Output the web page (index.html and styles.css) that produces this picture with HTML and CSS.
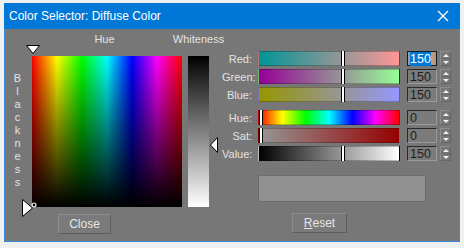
FILE: index.html
```html
<!DOCTYPE html>
<html lang="en">
    <head>
        <meta charset="UTF-8">
        <title>Color Selector: Diffuse Color</title>
        <link rel="stylesheet" href="styles.css">
    </head>
    <body>
        <div class="window">
            <div class="titlebar">
                <span class="title">Color Selector: Diffuse Color</span>
                <svg class="close-x" width="12" height="12" viewBox="0 0 12 12">
                    <path d="M1 1 L11 11 M11 1 L1 11" stroke="#fff" stroke-width="1.3" fill="none"/>
                </svg>
            </div>
            <div class="content">
                <!-- picker -->
                <div class="left">
                    <div class="heading">
                        <span class="heading-hue">Hue</span>
                        <span class="heading-white"><span>Whiteness</span></span>
                    </div>
                    <div class="picker">
                        <div class="blackness">
                            <span>B</span><span>l</span><span>a</span><span>c</span><span>k</span><span>n</span><span>e</span><span>s</span><span>s</span>
                        </div>
                        <div class="square">
                            <svg class="marker marker-hue" width="14" height="9" viewBox="0 0 14 9">
                                <path d="M0.5 0.5 L13.5 0.5 L7 8.5 Z" fill="#fff" stroke="#000"/>
                            </svg>
                            <svg class="marker marker-black" width="11" height="18" viewBox="0 0 11 18">
                                <path d="M0.5 0.5 L10.5 9 L0.5 17.5 Z" fill="#fff" stroke="#000"/>
                            </svg>
                            <svg class="marker marker-cursor" width="6" height="6" viewBox="0 0 6 6">
                                <circle cx="3" cy="3" r="2" fill="none" stroke="#fff" stroke-width="1.2"/>
                            </svg>
                        </div>
                        <div class="whiteness">
                            <svg class="marker marker-white" width="8" height="16" viewBox="0 0 8 16">
                                <path d="M7.5 0.5 L0.5 8 L7.5 15.5 Z" fill="#fff" stroke="#000"/>
                            </svg>
                        </div>
                    </div>
                    <button class="btn btn-close">Close</button>
                </div>

                <!-- sliders -->
                <div class="right">
                    <div class="row">
                        <span class="label">Red:</span>
                        <div class="track track-red"><span class="thumb" style="left: 82px"></span></div>
                        <div class="field focused"><span class="selected">150</span><span class="caret"></span></div>
                        <div class="spin"><span class="spin-up"></span><span class="spin-down"></span></div>
                    </div>
                    <div class="row">
                        <span class="label">Green:</span>
                        <div class="track track-green"><span class="thumb" style="left: 82px"></span></div>
                        <div class="field">150</div>
                        <div class="spin"><span class="spin-up"></span><span class="spin-down"></span></div>
                    </div>
                    <div class="row">
                        <span class="label">Blue:</span>
                        <div class="track track-blue"><span class="thumb" style="left: 82px"></span></div>
                        <div class="field">150</div>
                        <div class="spin"><span class="spin-up"></span><span class="spin-down"></span></div>
                    </div>
                    <div class="row row-group">
                        <span class="label">Hue:</span>
                        <div class="track track-hue"><span class="thumb" style="left: 0px"></span></div>
                        <div class="field">0</div>
                        <div class="spin"><span class="spin-up"></span><span class="spin-down"></span></div>
                    </div>
                    <div class="row">
                        <span class="label">Sat:</span>
                        <div class="track track-sat"><span class="thumb" style="left: 0px"></span></div>
                        <div class="field">0</div>
                        <div class="spin"><span class="spin-up"></span><span class="spin-down"></span></div>
                    </div>
                    <div class="row">
                        <span class="label">Value:</span>
                        <div class="track track-value"><span class="thumb" style="left: 82px"></span></div>
                        <div class="field">150</div>
                        <div class="spin"><span class="spin-up"></span><span class="spin-down"></span></div>
                    </div>
                    <div class="preview"></div>
                    <button class="btn btn-reset"><u>R</u>eset</button>
                </div>
            </div>
        </div>
    </body>
</html>
```

FILE: styles.css
```css
*{
    margin: 0;
    padding: 0;
    box-sizing: border-box;
    font-family: "Liberation Sans", Arial, sans-serif;
}

body{
    background: #eef0f2;
}

.window{
    margin: 3px 0 0 4px;
    width: 456px;
    height: 239px;
    background: #777;
    border: 1px solid #3a8ad8;
    border-top: none;
}

.titlebar{
    display: flex;
    align-items: center;
    justify-content: space-between;
    height: 26px;
    margin: 0 -1px;
    padding: 0 11px 0 5px;
    background: #0078d7;
    color: #fff;
}

.title{
    font-size: 12px;
}

.content{
    display: flex;
}

/* Coluna da esquerda */
.left{
    width: 217px;
    display: flex;
    flex-direction: column;
}

.heading{
    display: flex;
    height: 27px;
    padding: 4px 0 0 27px;
    color: #e2e2e2;
    font-size: 11px;
}

.heading-hue{
    width: 150px;
    padding-right: 5px;
    text-align: center;
}

.heading-white{
    width: 21px;
    margin-left: 6px;
    display: flex;
    justify-content: center;
    white-space: nowrap;
}

.picker{
    display: flex;
    height: 151px;
}

.blackness{
    width: 27px;
    display: flex;
    flex-direction: column;
    align-items: center;
    padding: 16px 2px 0 0;
    color: #e2e2e2;
    font-size: 11px;
    line-height: 13px;
}

.square{
    position: relative;
    width: 150px;
    background:
        linear-gradient(to bottom, rgba(0,0,0,0) 0%, rgba(0,0,0,0.55) 55%, #000 100%),
        linear-gradient(to right, #f00 0%, #ff0 16.67%, #0f0 33.33%, #0ff 50%, #00f 66.67%, #f0f 83.33%, #f00 100%);
}

.whiteness{
    position: relative;
    width: 21px;
    margin-left: 6px;
    background: linear-gradient(to bottom, #000 0%, #fff 100%);
}

.marker{
    position: absolute;
    display: block;
}

.marker-hue{
    left: -6px;
    top: -11px;
}

.marker-black{
    left: -10px;
    top: 143px;
}

.marker-cursor{
    left: -1px;
    top: 146px;
}

.marker-white{
    left: 22px;
    top: 81px;
}

.btn{
    height: 20px;
    background: #7a7a7a;
    border: 1px solid #5c5c5c;
    border-top-color: #8c8c8c;
    border-left-color: #8c8c8c;
    color: #e6e6e6;
    font-size: 12px;
}

.btn-close{
    width: 53px;
    margin: 7px 0 0 53px;
}

/* Coluna da direita */
.right{
    display: flex;
    flex-direction: column;
    padding-top: 22px;
}

.row{
    display: flex;
    align-items: center;
    height: 15px;
    margin-bottom: 3px;
}

.row-group{
    margin-top: 5px;
}

.label{
    width: 30px;
    text-align: right;
    color: #e2e2e2;
    font-size: 11px;
    white-space: nowrap;
}

.track{
    position: relative;
    width: 142px;
    height: 15px;
    margin-left: 6px;
    border: 1px solid rgba(0,0,0,0.25);
}

.track-red{ background: linear-gradient(to right, #009696, #ff9696); }
.track-green{ background: linear-gradient(to right, #960096, #96ff96); }
.track-blue{ background: linear-gradient(to right, #969600, #9696ff); }
.track-hue{ background: linear-gradient(to right, #f00, #ff0 16.67%, #0f0 33.33%, #0ff 50%, #00f 66.67%, #f0f 83.33%, #f00); }
.track-sat{ background: linear-gradient(to right, #969696, #960000); }
.track-value{ background: linear-gradient(to right, #000, #fff); }

.thumb{
    position: absolute;
    top: -1px;
    width: 4px;
    height: 15px;
    background: #fff;
    border-left: 1px solid #000;
    border-right: 1px solid #000;
}

.field{
    display: flex;
    align-items: center;
    width: 30px;
    height: 15px;
    margin-left: 7px;
    padding-left: 2px;
    background: #7b7b7b;
    border: 1px solid #9a9a9a;
    border-top-color: #2a2a2a;
    border-left-color: #2a2a2a;
    color: #1e1e1e;
    font-size: 12.5px;
}

.field.focused{
    background: #9c9c9c;
    border-color: #1a1a1a;
}

.selected{
    background: #0078d7;
    color: #fff;
}

.caret{
    width: 3px;
    height: 12px;
    background: #d0956a;
}

.spin{
    display: flex;
    flex-direction: column;
    width: 11px;
    height: 15px;
    margin-left: 3px;
    border: 1px solid #8e8e8e;
    border-right-color: #666;
    border-bottom-color: #666;
}

.spin-up, .spin-down{
    flex: 1;
    display: flex;
    align-items: center;
    justify-content: center;
}

.spin-up{
    border-bottom: 1px solid #6a6a6a;
}

.spin-up::after{
    content: "";
    border-left: 3px solid transparent;
    border-right: 3px solid transparent;
    border-bottom: 3px solid #f2f2f2;
}

.spin-down::after{
    content: "";
    border-left: 3px solid transparent;
    border-right: 3px solid transparent;
    border-top: 3px solid #f2f2f2;
}

.preview{
    width: 168px;
    height: 27px;
    margin: 11px 0 0 36px;
    background: #909090;
    border: 1px solid #6c6c6c;
}

.btn-reset{
    width: 55px;
    margin: 11px 0 0 70px;
}
```
